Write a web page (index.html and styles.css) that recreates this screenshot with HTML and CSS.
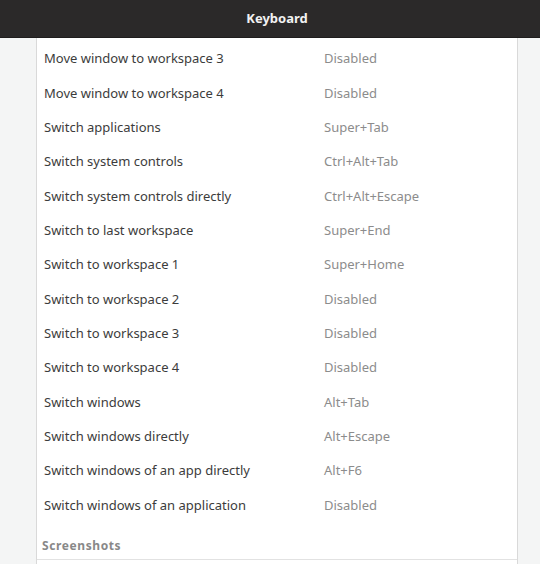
FILE: index.html
```html
<!DOCTYPE html>
<html lang="en">
<head>
    <meta charset="UTF-8">
    <meta name="viewport" content="width=device-width, initial-scale=1.0">
    <title>Keyboard</title>
    <link rel="stylesheet" href="styles.css">
</head>
<body>
    <header class="titlebar">Keyboard</header>

    <div class="content">
        <div class="panel">
            <!-- Список сочетаний клавиш -->
            <div class="shortcuts">
                <div class="row"><span class="name">Move window to workspace 3</span><span class="accel">Disabled</span></div>
                <div class="row"><span class="name">Move window to workspace 4</span><span class="accel">Disabled</span></div>
                <div class="row"><span class="name">Switch applications</span><span class="accel">Super+Tab</span></div>
                <div class="row"><span class="name">Switch system controls</span><span class="accel">Ctrl+Alt+Tab</span></div>
                <div class="row"><span class="name">Switch system controls directly</span><span class="accel">Ctrl+Alt+Escape</span></div>
                <div class="row"><span class="name">Switch to last workspace</span><span class="accel">Super+End</span></div>
                <div class="row"><span class="name">Switch to workspace 1</span><span class="accel">Super+Home</span></div>
                <div class="row"><span class="name">Switch to workspace 2</span><span class="accel">Disabled</span></div>
                <div class="row"><span class="name">Switch to workspace 3</span><span class="accel">Disabled</span></div>
                <div class="row"><span class="name">Switch to workspace 4</span><span class="accel">Disabled</span></div>
                <div class="row"><span class="name">Switch windows</span><span class="accel">Alt+Tab</span></div>
                <div class="row"><span class="name">Switch windows directly</span><span class="accel">Alt+Escape</span></div>
                <div class="row"><span class="name">Switch windows of an app directly</span><span class="accel">Alt+F6</span></div>
                <div class="row"><span class="name">Switch windows of an application</span><span class="accel">Disabled</span></div>
            </div>

            <!-- Следующая группа -->
            <div class="section-title">Screenshots</div>
            <div class="section-list"></div>
        </div>
    </div>
</body>
</html>
```

FILE: styles.css
```css
/* Общие стили */
body {
    margin: 0;
    font-family: "Noto Sans", "DejaVu Sans", sans-serif;
    background: #f4f5f5;
    color: #3c3c3c;
    height: 564px;
    overflow: hidden;
}

/* Заголовок окна */
.titlebar {
    height: 37px;
    line-height: 37px;
    padding-left: 14px;
    background: #2b2929;
    border-bottom: 1px solid #1f1d1d;
    color: #f2f2f2;
    font-size: 13px;
    font-weight: bold;
    text-align: center;
}

/* Основная область */
.content {
    padding: 0 22px 0 36px;
}

.panel {
    background: #fff;
    border-left: 1px solid #d9d9d9;
    border-right: 1px solid #d9d9d9;
    padding-top: 3px;
}

/* Строки сочетаний */
.row {
    display: flex;
    align-items: center;
    height: 34.35px;
    font-size: 13px;
}

.name {
    width: 280px;
    padding-left: 7px;
}

.accel {
    color: #8c8c8c;
}

/* Заголовок раздела */
.section-title {
    padding: 16px 0 6px 5px;
    font-size: 12px;
    font-weight: bold;
    letter-spacing: 0.6px;
    color: #888;
    line-height: 15px;
}

.section-list {
    border-top: 1px solid #e2e2e2;
    height: 20px;
}
```
